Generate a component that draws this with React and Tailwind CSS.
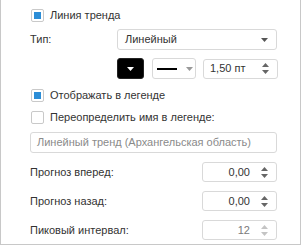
import React from 'react';

const font = { fontFamily: '"Liberation Sans", Arial, sans-serif' };

function Check({ checked, label }) {
  return (
    <div className="flex items-center h-[13px]">
      <div className="w-[13px] h-[13px] ml-[1px] rounded-[2px] border border-[#c9c9c9] bg-white flex items-center justify-center">
        {checked && <div className="w-[7px] h-[7px] bg-[#2c8dd6]" />}
      </div>
      <span className="ml-[6px] text-[11px] text-[#333]">{label}</span>
    </div>
  );
}

function Caret({ color = '#555' }) {
  return (
    <svg width="7" height="4" viewBox="0 0 7 4">
      <path d="M0 0h7L3.5 4z" fill={color} />
    </svg>
  );
}

function Spin({ value, align = 'right', disabled }) {
  const arrow = disabled ? '#c4c4c4' : '#666';
  return (
    <div className="w-[75px] h-[20px] rounded-[3px] border border-[#d9d9d9] bg-white flex items-center">
      <span
        className={`flex-1 text-[11px] ${align === 'right' ? 'text-right pr-[11px]' : 'pl-[6px]'} ${disabled ? 'text-[#7a7a7a]' : 'text-[#333]'}`}
      >
        {value}
      </span>
      <div className="w-[7px] mr-[8px] flex flex-col items-center gap-[3px]">
        <svg width="7" height="4" viewBox="0 0 7 4"><path d="M0 4h7L3.5 0z" fill={arrow} /></svg>
        <svg width="7" height="4" viewBox="0 0 7 4"><path d="M0 0h7L3.5 4z" fill={arrow} /></svg>
      </div>
    </div>
  );
}

function SpinRow({ label, value, disabled }) {
  return (
    <div className="flex items-center justify-between w-[247px] mt-[9px]">
      <span className="text-[11px] text-[#333]">{label}</span>
      <Spin value={value} disabled={disabled} />
    </div>
  );
}

export default function App() {
  return (
    <div className="w-[303px] h-[246px] bg-white overflow-hidden" style={font}>
      <div className="w-[301px] h-[245px] border-l border-r border-b border-[#c8c8c8] pl-[29px] pt-[9px] flex flex-col">
        <Check checked label="Линия тренда" />

        <div className="flex items-center mt-[7px]">
          <span className="w-[87px] text-[11px] text-[#333]">Тип:</span>
          <div className="w-[160px] h-[21px] rounded-[3px] border border-[#d9d9d9] bg-white flex items-center justify-between pl-[7px] pr-[8px]">
            <span className="text-[11px] text-[#333]">Линейный</span>
            <Caret />
          </div>
        </div>

        <div className="flex items-center mt-[8px] ml-[87px]">
          <div className="w-[27px] h-[21px] rounded-[3px] border border-[#222] bg-black flex items-center justify-center">
            <Caret color="#fff" />
          </div>
          <div className="ml-[8px] w-[44px] h-[21px] rounded-[3px] border border-[#d9d9d9] bg-white flex items-center pl-[4px]">
            <div className="w-[20px] h-[2px] bg-black" />
            <div className="ml-[9px]">
              <Caret color="#999" />
            </div>
          </div>
          <div className="ml-[7px]">
            <div className="h-[21px] flex items-center">
              <Spin value="1,50 пт" align="left" />
            </div>
          </div>
        </div>

        <div className="mt-[10px]">
          <Check checked label="Отображать в легенде" />
        </div>
        <div className="mt-[9px]">
          <Check label="Переопределить имя в легенде:" />
        </div>

        <div className="mt-[8px] w-[247px] h-[21px] rounded-[3px] border border-[#d9d9d9] bg-white flex items-center pl-[6px]">
          <span className="text-[11px] text-[#8a8a8a] whitespace-nowrap">Линейный тренд (Архангельская область)</span>
        </div>

        <SpinRow label="Прогноз вперед:" value="0,00" />
        <SpinRow label="Прогноз назад:" value="0,00" />
        <SpinRow label="Пиковый интервал:" value="12" disabled />
      </div>
    </div>
  );
}
